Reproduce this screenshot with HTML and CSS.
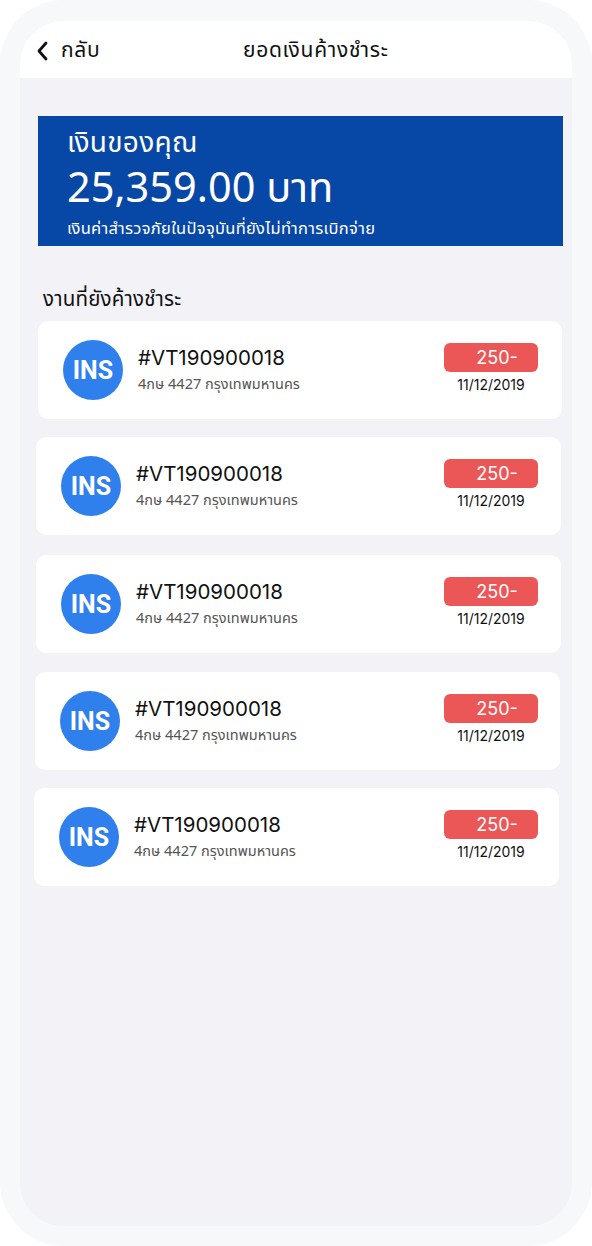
FILE: index.html
```html
<!DOCTYPE html>
<html lang="th">
<head>
<meta charset="utf-8">
<title>ยอดเงินค้างชำระ</title>
<link rel="stylesheet" href="styles.css">
</head>
<body>
<div class="phone">
  <div class="screen">
    <header class="topbar">
      <div class="back">
        <svg class="chev" width="12" height="20" viewBox="0 0 12 20"><path d="M10 2 L3 10 L10 18" fill="none" stroke="#111" stroke-width="2.8" stroke-linecap="round" stroke-linejoin="round"/></svg>
        <span class="back-text">กลับ</span>
      </div>
      <div class="title">ยอดเงินค้างชำระ</div>
    </header>
    <main class="content">
      <section class="balance">
        <div class="bal-label">เงินของคุณ</div>
        <div class="bal-amount">25,359.00 บาท</div>
        <div class="bal-note">เงินค่าสำรวจภัยในปัจจุบันที่ยังไม่ทำการเบิกจ่าย</div>
      </section>
      <h2 class="section-title">งานที่ยังค้างชำระ</h2>
      <div class="list">
        <div class="card c1">
          <div class="avatar">INS</div>
          <div class="info"><div class="code">#VT190900018</div><div class="sub">4กษ 4427 กรุงเทพมหานคร</div></div>
          <div class="meta"><div class="badge">250-</div><div class="date">11/12/2019</div></div>
        </div>
        <div class="card c2">
          <div class="avatar">INS</div>
          <div class="info"><div class="code">#VT190900018</div><div class="sub">4กษ 4427 กรุงเทพมหานคร</div></div>
          <div class="meta"><div class="badge">250-</div><div class="date">11/12/2019</div></div>
        </div>
        <div class="card c3">
          <div class="avatar">INS</div>
          <div class="info"><div class="code">#VT190900018</div><div class="sub">4กษ 4427 กรุงเทพมหานคร</div></div>
          <div class="meta"><div class="badge">250-</div><div class="date">11/12/2019</div></div>
        </div>
        <div class="card c4">
          <div class="avatar">INS</div>
          <div class="info"><div class="code">#VT190900018</div><div class="sub">4กษ 4427 กรุงเทพมหานคร</div></div>
          <div class="meta"><div class="badge">250-</div><div class="date">11/12/2019</div></div>
        </div>
        <div class="card c5">
          <div class="avatar">INS</div>
          <div class="info"><div class="code">#VT190900018</div><div class="sub">4กษ 4427 กรุงเทพมหานคร</div></div>
          <div class="meta"><div class="badge">250-</div><div class="date">11/12/2019</div></div>
        </div>
      </div>
    </main>
  </div>
</div>
</body>
</html>
```
FILE: styles.css
```css
* { box-sizing: border-box; margin: 0; padding: 0; }
html, body { background: #ffffff; }
body {
  width: 592px;
  height: 1246px;
  font-family: "Noto Sans Thai", "Noto Sans", "DejaVu Sans", sans-serif;
  color: #111;
}
.phone {
  width: 592px;
  height: 1246px;
  background: #f7f8fa;
  border-radius: 64px;
  padding: 21px 20px 20px 20px;
}
.screen {
  width: 552px;
  height: 1205px;
  background: #f2f2f7;
  border-radius: 43px;
  overflow: hidden;
  display: flex;
  flex-direction: column;
}
.topbar {
  height: 57px;
  background: #fff;
  display: flex;
  align-items: center;
  padding-left: 16px;
  padding-top: 2px;
}
.back {
  display: flex;
  align-items: center;
  width: 207px;
}
.chev { display: block; }
.back-text {
  margin-left: 13px;
  font-size: 21px;
  letter-spacing: 0.7px;
  line-height: 26px;
}
.title {
  font-size: 21px;
  letter-spacing: 0.7px;
  line-height: 26px;
}
.content {
  padding-top: 38px;
}
.balance {
  margin-left: 18px;
  width: 525px;
  height: 130px;
  background: #0747a6;
  color: #fff;
  padding: 8px 0 0 29px;
}
.bal-label {
  font-size: 28px;
  letter-spacing: 0.3px;
  line-height: 40px;
}
.bal-amount {
  font-size: 41.5px;
  line-height: 50px;
  margin-top: 1px;
}
.bal-note {
  font-size: 16.5px;
  letter-spacing: 0.3px;
  line-height: 22px;
  margin-top: 3px;
}
.section-title {
  font-weight: 400;
  font-size: 20.5px;
  letter-spacing: 0.2px;
  line-height: 26px;
  margin: 41px 0 0 23px;
}
.list {
  margin-top: 8px;
  display: flex;
  flex-direction: column;
}
.card {
  width: 525px;
  height: 98px;
  background: #fff;
  border-radius: 10px;
  display: flex;
  align-items: center;
  padding: 0 25px;
}
.c1 { margin-left: 18px; width: 524px; padding-right: 24px; }
.c2 { margin-left: 16px; margin-top: 18px; padding-right: 23px; }
.c3 { margin-left: 16px; margin-top: 20px; padding-right: 23px; }
.c4 { margin-left: 15px; margin-top: 19px; padding-right: 22px; }
.c5 { margin-left: 14px; margin-top: 18px; padding-right: 21px; }
.avatar {
  width: 60px;
  height: 60px;
  border-radius: 50%;
  background: #2f80ed;
  color: #fff;
  font-family: Roboto, "Liberation Sans", sans-serif;
  font-weight: 700;
  font-size: 25px;
  display: flex;
  align-items: center;
  justify-content: center;
  flex: none;
}
.info {
  margin-left: 15px;
  flex: 1;
  margin-top: -1px;
}
.code {
  font-family: Inter, "Liberation Sans", sans-serif;
  font-size: 20.5px;
  line-height: 26px;
  color: #111;
}
.sub {
  font-size: 14.5px;
  line-height: 18px;
  margin-top: 5px;
  color: #555;
}
.meta {
  width: 94px;
  display: flex;
  flex-direction: column;
  align-items: center;
  margin-top: -2px;
}
.badge {
  width: 94px;
  height: 29px;
  border-radius: 6px;
  background: #eb5757;
  color: #fff;
  font-family: Inter, "Liberation Sans", sans-serif;
  font-size: 18px;
  line-height: 29px;
  text-align: center;
  padding-left: 12px;
}
.date {
  font-family: Inter, "Liberation Sans", sans-serif;
  font-size: 14px;
  line-height: 20px;
  margin-top: 3px;
  color: #111;
}
```
